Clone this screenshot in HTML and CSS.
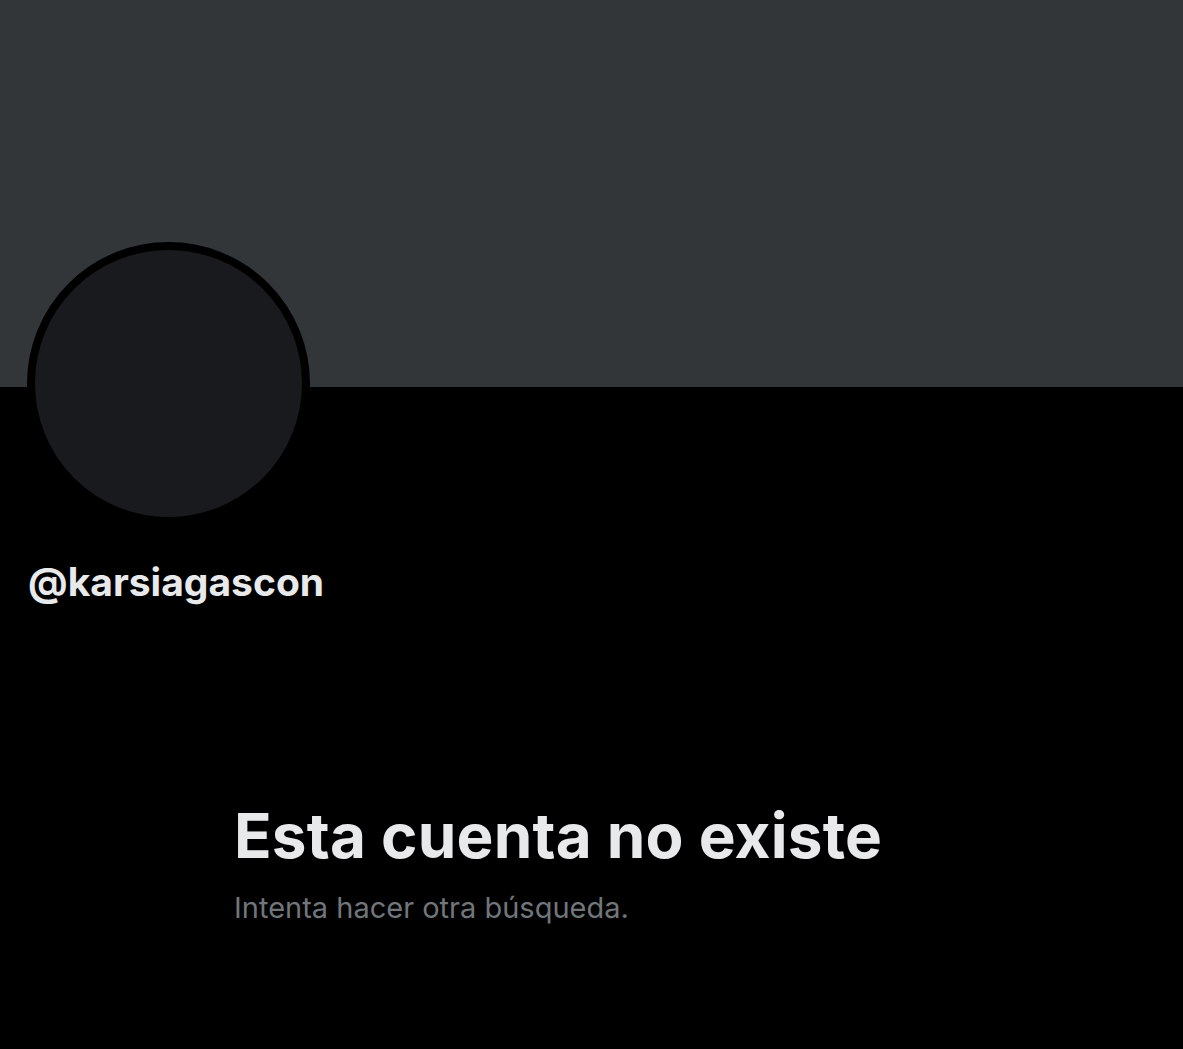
FILE: index.html
```html
<!DOCTYPE html>
<html lang="es">
<head>
<meta charset="utf-8">
<title>Perfil</title>
<link rel="stylesheet" href="styles.css">
</head>
<body>
<div class="page">
  <div class="banner"></div>
  <div class="profile">
    <div class="avatar"></div>
    <div class="handle">@karsiagascon</div>
  </div>
  <div class="empty">
    <h1 class="empty-title">Esta cuenta no existe</h1>
    <p class="empty-sub">Intenta hacer otra búsqueda.</p>
  </div>
</div>
</body>
</html>
```
FILE: styles.css
```css
html, body {
  margin: 0;
  padding: 0;
  background: #000;
}
body {
  font-family: "Inter", "Roboto", "Liberation Sans", sans-serif;
  color: #e7e9ea;
}
.page {
  width: 1183px;
  height: 1049px;
  overflow: hidden;
  background: #000;
}
.banner {
  height: 387px;
  background: #333639;
}
.profile {
  padding-left: 27px;
}
.avatar {
  width: 267px;
  height: 267px;
  border: 8px solid #000;
  border-radius: 50%;
  background: #191a1d;
  margin-top: -145px;
}
.handle {
  margin-top: 33px;
  font-size: 39px;
  font-weight: 700;
  line-height: 48px;
  padding-left: 1px;
}
.empty {
  padding-left: 234px;
  margin-top: 193px;
}
.empty-title {
  margin: 0;
  font-size: 62px;
  font-weight: 700;
  line-height: 74px;
  letter-spacing: 0.2px;
}
.empty-sub {
  margin: 17px 0 0;
  font-size: 29px;
  line-height: 36px;
  color: #71767b;
}
```
